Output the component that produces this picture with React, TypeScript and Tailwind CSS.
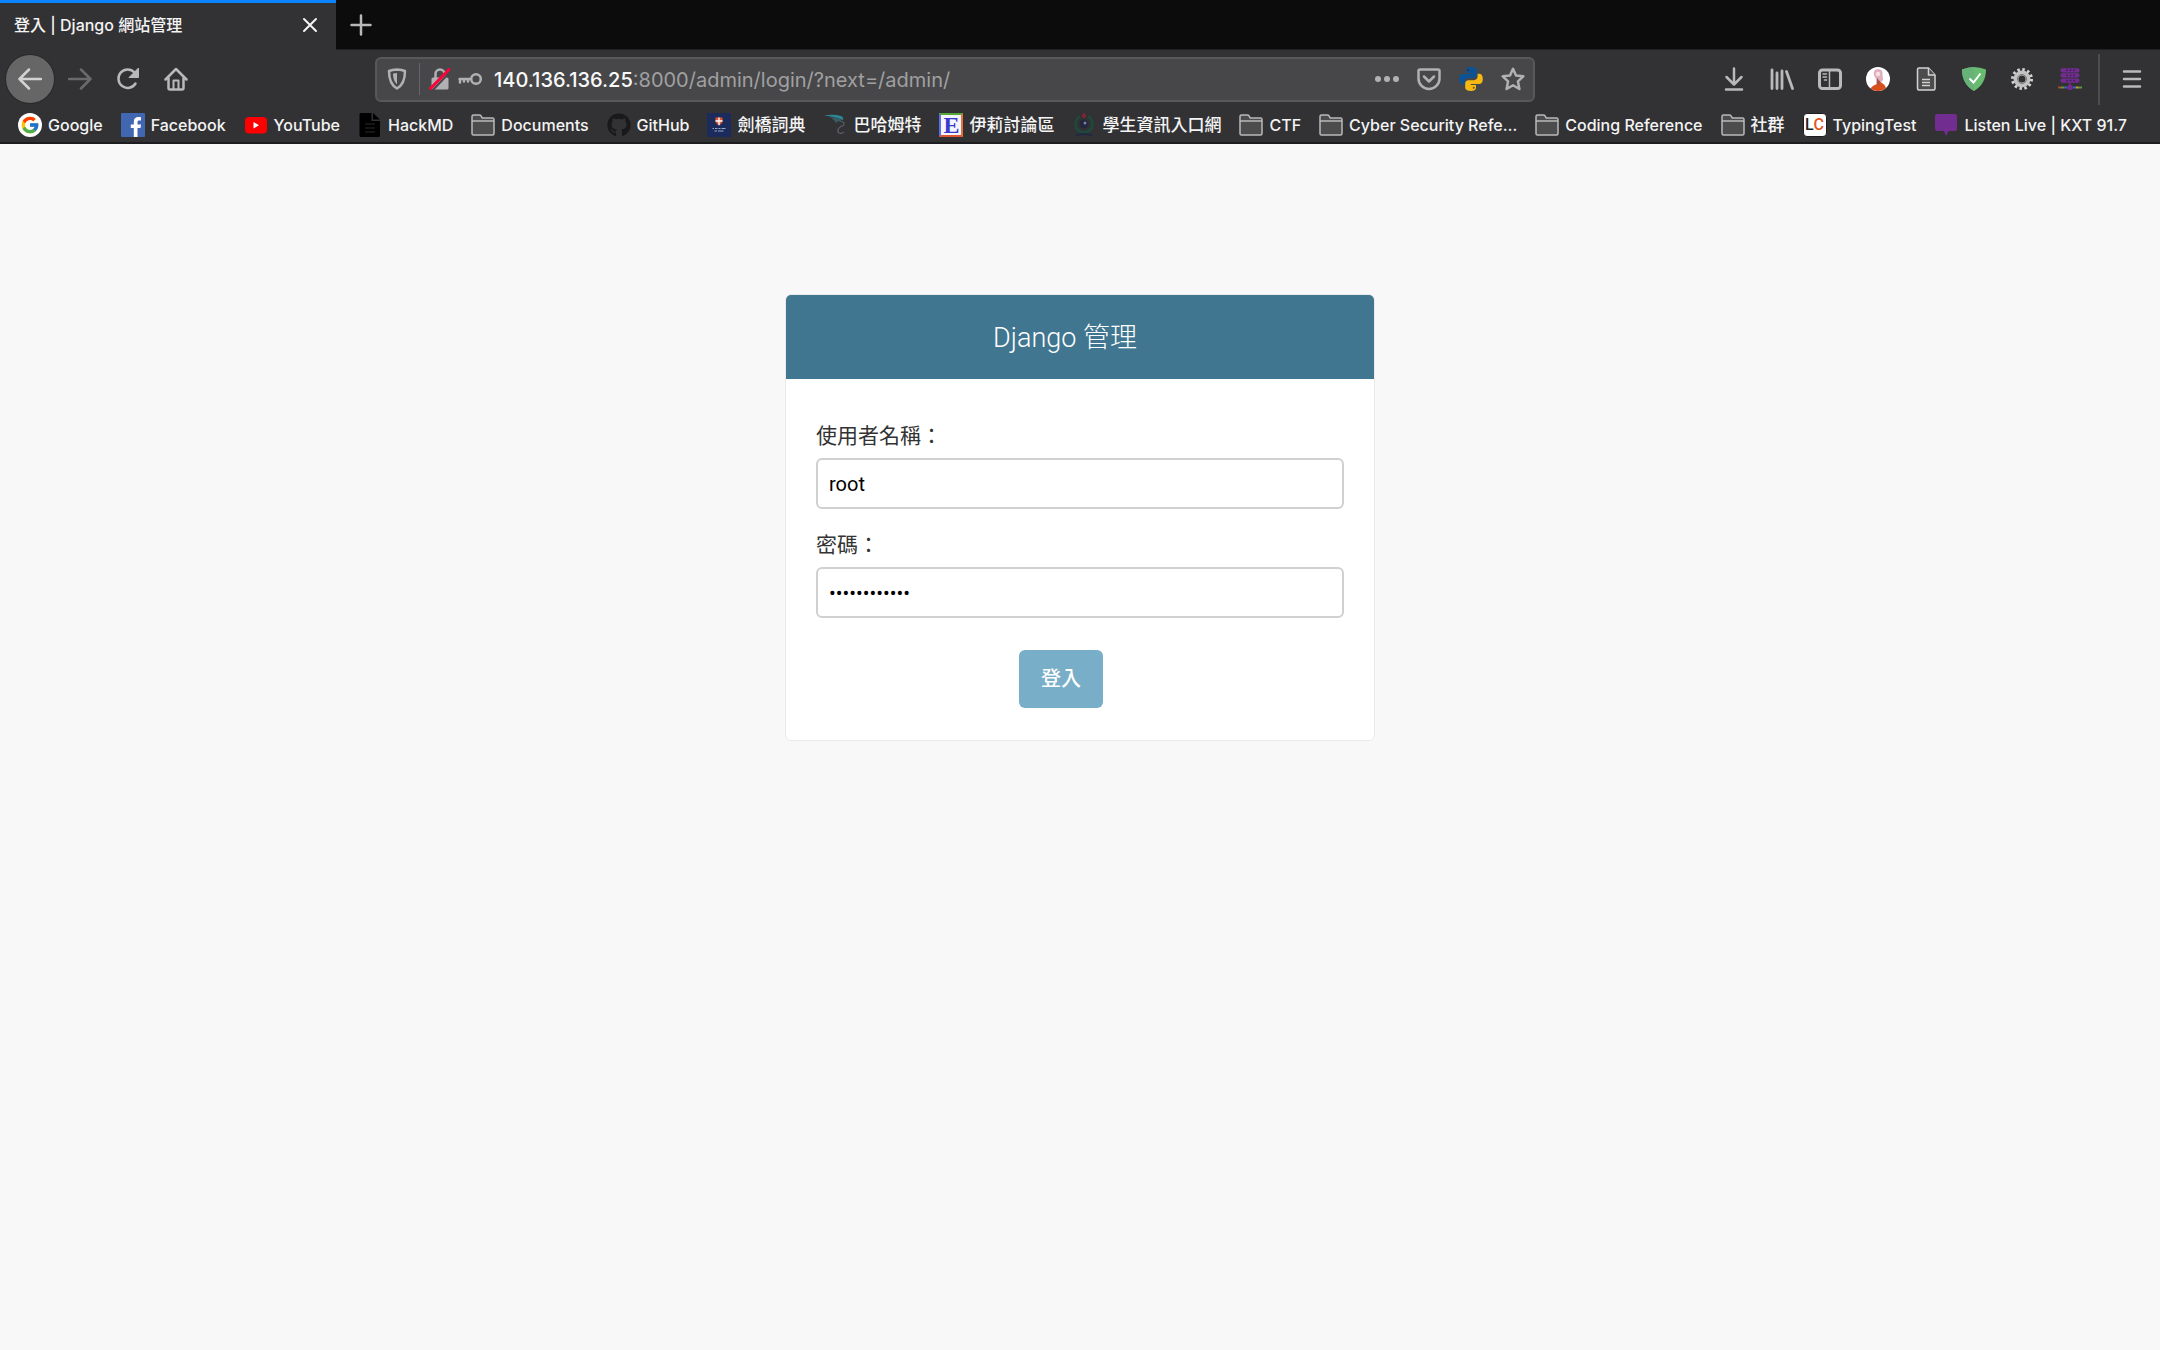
import type { ReactNode } from "react";
import { FaGithub } from "react-icons/fa";
import { FcGoogle } from "react-icons/fc";

type Bookmark = { label: string; icon: ReactNode; cjk?: boolean };

function FolderIcon() {
  return (
    <svg viewBox="0 0 24 24" className="size-6" fill="#4c4c4d" stroke="#b9b9ba" strokeWidth="1.500" strokeLinejoin="round">
      <path d="M1 20.500V3.500q0-1.500 1.500-1.500h6q1 0 1.500.8L11.300 5H21.500q1.500 0 1.500 1.500v14q0 1.500-1.500 1.500h-19Q1 22 1 20.500Z" />
      <path d="M1 8h22" />
    </svg>
  );
}

function GoogleIcon() {
  return (
    <span className="flex size-6 items-center justify-center rounded-full bg-white">
      <FcGoogle className="size-5" />
    </span>
  );
}

function FacebookIcon() {
  return (
    <svg viewBox="0 0 24 24" className="size-6">
      <rect width="24" height="24" rx="1" fill="#4267b2" />
      <path d="M16.500 24v-9h3l.5-3.600h-3.500V9.200c0-1.100.4-1.700 1.800-1.700H20V4.300c-.4 0-1.400-.2-2.700-.2-2.700 0-4.500 1.600-4.500 4.600v2.700H9.800V15h3v9Z" fill="#fff" />
    </svg>
  );
}

function YouTubeIcon() {
  return (
    <svg viewBox="0 0 24 24" className="size-6">
      <rect x="1" y="4" width="22" height="16.500" rx="4" fill="#f00" />
      <path d="M9.500 9v6.500l5.500-3.250Z" fill="#fff" />
    </svg>
  );
}

function HackMdIcon() {
  return (
    <svg viewBox="0 0 24 24" className="size-6">
      <path d="M1.500 1.500Q1.500 0 3 0H13.500v8h8.500v14.500q0 1.500-1.500 1.500H3q-1.500 0-1.500-1.500Z" fill="#000" />
      <path d="M15 0l7 6.500h-7Z" fill="#000" />
      <path d="M7 11h10M7 15h10M7 19h10" stroke="#2b2b2d" strokeWidth="1.200" />
    </svg>
  );
}

function CambridgeIcon() {
  return (
    <svg viewBox="0 0 24 24" className="size-6">
      <rect width="24" height="24" fill="#1b2c5c" />
      <path d="M8.500 4.500h7v4q-.8 2.800-3.500 3.800-2.700-1-3.500-3.800Z" fill="#e4572e" />
      <path d="M12 4.500v7.800M8.500 8h7" stroke="#fff" strokeWidth="1.300" />
      <path d="M5.500 15.500h1.500m1 0h2.500m1 0h2m1 0h4M7.500 18h2.500m1 0h5.500" stroke="#9aa6c8" strokeWidth="1.100" />
    </svg>
  );
}

function BahamutIcon() {
  return (
    <svg viewBox="0 0 24 24" className="size-6">
      <path d="M1 2.500q10-1.500 17 .5 3 1.500 2 4-8-3.500-19-4.500Z" fill="#2b8793" />
      <path d="M6 4q7 .5 12 2.500l1 3-4-1.500q-1 2.500-2.500 1.500Q11 6 6 4Z" fill="#3a5d63" />
      <path d="M19 8.500q3 1 1.500 4-3 .5-5 3-1.500 3 .5 4.500 2.500 1 5-1" fill="none" stroke="#5c6265" strokeWidth="1.200" />
    </svg>
  );
}

function EyneyIcon() {
  return (
    <span className="flex size-6 items-center justify-center border-2 border-t-[#55a63a] border-r-[#e8703a] border-b-[#dd5533] border-l-[#5a6fe8] bg-[#f4f4fc] font-['Liberation_Serif',serif] text-2xl leading-none font-bold text-[#3a3ac8]">
      E
    </span>
  );
}

function SchoolIcon() {
  return (
    <svg viewBox="0 0 24 24" className="size-6">
      <path d="M8 3.500a8.500 8.500 0 1 0 8 0" fill="none" stroke="#1c4a3c" strokeWidth="2.500" />
      <path d="M12 0v5M10 3h4" stroke="#84242c" strokeWidth="2" />
      <circle cx="12" cy="11" r="4.500" fill="#23263c" />
      <circle cx="13" cy="10" r="1.500" fill="#77809c" />
      <path d="M4 22.500q8-3 16 0" fill="none" stroke="#222743" strokeWidth="2" />
    </svg>
  );
}

function TypingIcon() {
  return (
    <span className="flex size-6 items-center justify-center rounded-sm border border-[#1c1c1d] bg-white font-['Roboto',sans-serif] text-base leading-none font-medium text-[#222]">
      L<span className="text-[#e2571f]">C</span>
    </span>
  );
}

function KxtIcon() {
  return (
    <svg viewBox="0 0 24 24" className="size-6">
      <path d="M3 1h18q2 0 2 2v13q0 2-2 2h-6.500L12 23l-2-5H3q-2 0-2-2V3q0-2 2-2Z" fill="#722d91" />
    </svg>
  );
}

const bookmarks: Bookmark[] = [
  { label: "Google", icon: <GoogleIcon /> },
  { label: "Facebook", icon: <FacebookIcon /> },
  { label: "YouTube", icon: <YouTubeIcon /> },
  { label: "HackMD", icon: <HackMdIcon /> },
  { label: "Documents", icon: <FolderIcon /> },
  { label: "GitHub", icon: <FaGithub className="size-6 text-[#19191b]" /> },
  { label: "劍橋詞典", icon: <CambridgeIcon />, cjk: true },
  { label: "巴哈姆特", icon: <BahamutIcon />, cjk: true },
  { label: "伊莉討論區", icon: <EyneyIcon />, cjk: true },
  { label: "學生資訊入口網", icon: <SchoolIcon />, cjk: true },
  { label: "CTF", icon: <FolderIcon /> },
  { label: "Cyber Security Refe…", icon: <FolderIcon /> },
  { label: "Coding Reference", icon: <FolderIcon /> },
  { label: "社群", icon: <FolderIcon />, cjk: true },
  { label: "TypingTest", icon: <TypingIcon /> },
  { label: "Listen Live | KXT 91.7", icon: <KxtIcon /> },
];

function PythonIcon() {
  return (
    <svg viewBox="0 0 24 24" className="size-6">
      <path d="M11.900 0C8 0 7 1.500 7 3.400V6h5.200v1H4.300C2 7 .2 8.500.2 12.100c0 3.500 1.500 5.100 3.700 5.100H6v-2.800c0-2 1.600-3.600 3.600-3.600h5.200c1.700 0 3-1.400 3-3V3.400C17.800 1.300 15.800 0 11.900 0Z" fill="#0b5394" />
      <circle cx="9.300" cy="3.200" r="1" fill="#323234" />
      <path d="M12.100 24c3.900 0 4.900-1.500 4.900-3.400V18h-5.200v-1h7.900c2.300 0 4.100-1.500 4.100-5.100 0-3.500-1.500-5.100-3.700-5.100h-1.500v2.800c0 2-1.600 3.600-3.600 3.600H9.200c-1.700 0-3 1.400-3 3v4.400C6.200 22.700 8.200 24 12.100 24Z" fill="#f6b912" />
      <circle cx="14.700" cy="20.800" r="1" fill="#6b5a1d" />
    </svg>
  );
}

function AvatarIcon() {
  return (
    <svg viewBox="0 0 24 24" className="size-6">
      <clipPath id="avatar">
        <circle cx="12" cy="12" r="12" />
      </clipPath>
      <g clipPath="url(#avatar)">
        <rect width="24" height="24" fill="#fff" />
        <path d="M8 8.500Q6.500 2.500 12 2q5.500 0 4.500 6l.5 5-2.500 3H12l-2-4Z" fill="#dfb0bf" />
        <circle cx="12" cy="7" r="2.200" fill="#f5e2de" />
        <path d="M3 24q2-5 7-6.500l3-3.500 3 2q3 1.500 4 5l2 3Z" fill="#d9501e" />
        <path d="M11 11l3 3.500-1.500 4-2-2.500Z" fill="#a3524d" />
      </g>
    </svg>
  );
}

function GearIcon() {
  return (
    <svg viewBox="0 0 24 24" className="size-6">
      <circle cx="12" cy="12" r="9.500" fill="none" stroke="#d4d4d4" strokeWidth="3" strokeDasharray="2.500 2.475" />
      <circle cx="12" cy="12" r="6" fill="none" stroke="#c2c2c2" strokeWidth="5" />
      <circle cx="12" cy="12" r="4.500" fill="none" stroke="#777" strokeWidth="1" />
      <circle cx="12" cy="12" r="2.800" fill="#323234" />
    </svg>
  );
}

function ProxyIcon() {
  return (
    <svg viewBox="0 0 24 24" className="size-6">
      <rect x="2.500" y="1.200" width="19" height="4.300" rx="1.800" fill="#722d91" />
      <rect x="2.500" y="6.300" width="19" height="4.300" rx="1.800" fill="#722d91" />
      <rect x="2.500" y="11.400" width="19" height="4.300" rx="1.800" fill="#722d91" />
      <path d="M8 3.300h9M8 8.500h9M8 13.600h9" stroke="#47205b" strokeWidth="1.500" strokeDasharray="2 1.500" />
      <path d="M0 20.500h3" stroke="#b5472f" strokeWidth="2" />
      <path d="M3 20.500h3M20.500 20.500H24" stroke="#5c9a3c" strokeWidth="2" />
      <path d="M6 20.500h3M15 20.500h3" stroke="#3c67b0" strokeWidth="2" />
      <path d="M18 20.500h2.500" stroke="#d09a35" strokeWidth="2" />
      <path d="M12 15.500v5" stroke="#722d91" strokeWidth="1.500" />
      <circle cx="12" cy="20.500" r="2.800" fill="#722d91" />
    </svg>
  );
}

const extensions: { name: string; icon: ReactNode }[] = [
  {
    name: "Downloads",
    icon: (
      <svg viewBox="0 0 24 24" className="size-6" fill="none" stroke="#b9b9ba" strokeWidth="2.500" strokeLinecap="round" strokeLinejoin="round">
        <path d="M12 1.500V17M4.500 10l7.500 7.500L19.500 10M4 22.500h16" />
      </svg>
    ),
  },
  {
    name: "Library",
    icon: (
      <svg viewBox="0 0 24 24" className="size-6" fill="none" stroke="#b9b9ba" strokeWidth="2.800" strokeLinecap="round">
        <path d="M2 3v18.500M7 6v15.500M12 4v17.500M16.500 4.500l6 17" />
      </svg>
    ),
  },
  {
    name: "Sidebars",
    icon: (
      <svg viewBox="0 0 24 24" className="size-6" fill="none" stroke="#b9b9ba" strokeWidth="3" strokeLinecap="round">
        <rect x="1.500" y="3" width="21" height="18.500" rx="3" />
        <path d="M11.500 3v18.500" strokeWidth="1.500" />
        <path d="M5 7h3.500M5 10h3.500M6.500 13h2" strokeWidth="1.500" />
      </svg>
    ),
  },
  { name: "Profile", icon: <AvatarIcon /> },
  {
    name: "Page notes",
    icon: (
      <svg viewBox="0 0 24 24" className="size-6" fill="#4c4c4d" stroke="#d2d2d2" strokeWidth="1.500" strokeLinejoin="round">
        <path d="M5 1h9.500l6.500 7v13.500q0 1.500-1.500 1.500H5q-1.500 0-1.500-1.500v-19Q3.500 1 5 1Z" />
        <path d="M14.500 1v7H21M8 12.500h8M8 15.500h8M8 18.500h8" />
      </svg>
    ),
  },
  {
    name: "Protection",
    icon: (
      <svg viewBox="0 0 24 24" className="size-6">
        <path d="M12 0Q6 .3 0 2.500 0 17 12 24 24 17 24 2.500 18 .3 12 0Z" fill="#68bc71" />
        <path d="M12 0v24Q0 17 0 2.500 6 .3 12 0Z" fill="#67b279" />
        <path d="M7.500 11.500l4 4 7-9" fill="none" stroke="#fff" strokeWidth="2" />
      </svg>
    ),
  },
  { name: "Options", icon: <GearIcon /> },
  { name: "Proxy", icon: <ProxyIcon /> },
];

function TabStrip() {
  return (
    <div className="flex h-[50px] items-stretch border-b border-[#202022] bg-[#0c0c0d]">
      <div className="-mb-px flex w-[336px] items-center justify-between border-t-[3px] border-[#0a84ff] bg-[#323234] pr-4 pb-1 pl-3.5">
        <span className="text-base font-medium text-[#f4f4f5]">登入 | Django 網站管理</span>
        <button aria-label="Close tab">
          <svg viewBox="0 0 20 20" className="size-5" fill="none" stroke="#f4f4f5" strokeWidth="2" strokeLinecap="round">
            <path d="M4 4l12 12M16 4L4 16" />
          </svg>
        </button>
      </div>
      <button aria-label="New tab" className="flex w-[50px] items-center justify-center">
        <svg viewBox="0 0 24 24" className="size-6" fill="none" stroke="#b9b9ba" strokeWidth="2.500" strokeLinecap="round">
          <path d="M12 2.500v19M2.500 12h19" />
        </svg>
      </button>
    </div>
  );
}

function AddressBar() {
  return (
    <div className="flex h-[45px] w-full max-w-[1160px] items-center rounded-md border-2 border-[#58585a] bg-[#474749] px-2">
      <button aria-label="Tracking protection" className="mr-2.5">
        <svg viewBox="0 0 24 24" className="size-6">
          <path d="M12 2.500q-5 .3-8 1.500 0 13 8 17.500Q20 17 20 4 17 2.800 12 2.500Z" fill="none" stroke="#b1b1b3" strokeWidth="2.500" strokeLinejoin="round" />
          <path d="M12 6q-2.500.2-4 .8Q8 14 12 17.500Z" fill="#b1b1b3" />
        </svg>
      </button>
      <span className="h-8 w-px bg-[#62666f]" />
      <button aria-label="Connection is not secure" className="ml-2">
        <svg viewBox="0 0 24 24" className="size-6">
          <path d="M7.500 12V7a4.500 4.500 0 0 1 9 0v5" fill="none" stroke="#b1b1b3" strokeWidth="2.500" />
          <rect x="3.500" y="10.500" width="17" height="12" rx="1.500" fill="#b1b1b3" />
          <path d="M4 24L23.500 3.500" stroke="#474749" strokeWidth="2" />
          <path d="M2.500 21.500L21 2.500" stroke="#ff0039" strokeWidth="3" strokeLinecap="round" />
        </svg>
      </button>
      <button aria-label="Saved login" className="mr-3 ml-1.5">
        <svg viewBox="0 0 24 24" className="size-6">
          <circle cx="18" cy="12" r="4.800" fill="none" stroke="#b1b1b3" strokeWidth="2.500" />
          <path d="M13 12H1.500M2 12v3.500M6 12v2.500M10 12v2.500" fill="none" stroke="#b1b1b3" strokeWidth="2.500" strokeLinecap="round" />
        </svg>
      </button>
      <p className="flex-1 truncate pt-0.5 text-xl text-[#a0a0a2]">
        <span className="font-medium text-[#f9f9fa]">140.136.136.25</span>:8000/admin/login/?next=/admin/
      </p>
      <div className="flex items-center gap-[18px]">
        <button aria-label="Page actions">
          <svg viewBox="0 0 24 24" className="size-6" fill="#b1b1b3">
            <circle cx="3" cy="12" r="3" />
            <circle cx="12" cy="12" r="3" />
            <circle cx="21" cy="12" r="3" />
          </svg>
        </button>
        <button aria-label="Save to Pocket">
          <svg viewBox="0 0 24 24" className="size-6" fill="none" stroke="#b1b1b3" strokeWidth="2.500" strokeLinecap="round" strokeLinejoin="round">
            <path d="M3 2.500h18q1.500 0 1.500 1.500v7.500a10.500 10.500 0 0 1-21 0V4q0-1.500 1.500-1.500Z" />
            <path d="M7 9.500l5 5 5-5" />
          </svg>
        </button>
        <button aria-label="Python documentation">
          <PythonIcon />
        </button>
        <button aria-label="Bookmark this page">
          <svg viewBox="0 0 24 24" className="size-6" fill="none" stroke="#b1b1b3" strokeWidth="2.500" strokeLinejoin="round">
            <path d="M12 1.800l3 6.700 7.300.8-5.400 5 1.500 7.700L12 18.200 5.600 22l1.500-7.700-5.400-5L9 8.500Z" />
          </svg>
        </button>
      </div>
    </div>
  );
}

function NavBar() {
  return (
    <div className="flex h-[58px] items-center justify-between pr-4 pl-1.5">
      <div className="flex shrink-0 items-center gap-6">
        <button aria-label="Back" className="flex size-12 items-center justify-center rounded-full bg-[#666667] ring-1 ring-[#28282a]">
          <svg viewBox="0 0 24 24" className="size-6" fill="none" stroke="#d2d2d3" strokeWidth="2.500" strokeLinecap="round" strokeLinejoin="round">
            <path d="M23 12H1.500M11 2.500L1.500 12l9.500 9.500" />
          </svg>
        </button>
        <button aria-label="Forward" className="-ml-2.5">
          <svg viewBox="0 0 24 24" className="size-6" fill="none" stroke="#6a6a6b" strokeWidth="2.500" strokeLinecap="round" strokeLinejoin="round">
            <path d="M1 12h21.500M13 2.500l9.500 9.500-9.500 9.500" />
          </svg>
        </button>
        <button aria-label="Reload">
          <svg viewBox="0 0 24 24" className="size-6">
            <path d="M19.500 16.500A9.200 9.200 0 1 1 18.500 5.500" fill="none" stroke="#b9b9ba" strokeWidth="2.500" strokeLinecap="round" />
            <path d="M22.500 1v9.500H13Z" fill="#b9b9ba" stroke="#b9b9ba" strokeLinejoin="round" />
          </svg>
        </button>
        <button aria-label="Home">
          <svg viewBox="0 0 24 24" className="size-6" fill="none" stroke="#b9b9ba" strokeWidth="2.500" strokeLinecap="round" strokeLinejoin="round">
            <path d="M1.500 12.500L12 2l10.500 10.500M4.500 11v10q0 1.500 1.500 1.500h12q1.500 0 1.500-1.500V11" />
            <path d="M9.500 22v-8.500h5V22" strokeWidth="2" />
          </svg>
        </button>
      </div>
      <AddressBar />
      <div className="flex shrink-0 items-center gap-6">
        {extensions.map((item) => (
          <button key={item.name} aria-label={item.name}>
            {item.icon}
          </button>
        ))}
        <span className="-mr-1 -ml-2 h-[51px] w-0.5 bg-[#4d4d4f]" />
        <button aria-label="Menu">
          <svg viewBox="0 0 24 24" className="size-6" fill="none" stroke="#b9b9ba" strokeWidth="2.500" strokeLinecap="round">
            <path d="M4 4.500h16M4 12h16M4 19.500h16" />
          </svg>
        </button>
      </div>
    </div>
  );
}

function BookmarksBar() {
  return (
    <nav className="flex h-9 items-center gap-[18px] border-b-2 border-[#1d1d1f] px-[18px]">
      {bookmarks.map((item) => (
        <a key={item.label} href="#" className="flex shrink-0 items-center gap-1.5 leading-6 font-medium whitespace-nowrap text-[#f4f4f5]">
          {item.icon}
          <span className={item.cjk ? "text-[17px]" : "text-base"}>{item.label}</span>
        </a>
      ))}
    </nav>
  );
}

function LoginCard() {
  return (
    <div className="w-full max-w-[590px] overflow-hidden rounded-md border border-[#eaeaea] bg-white">
      <header className="flex h-[84px] items-center justify-center bg-[#417690] pt-0.5 pr-[30px]">
        <h1 className="text-[27px] font-light text-white">Django 管理</h1>
      </header>
      <form className="px-[30px] pt-[41px] pb-8" onSubmit={(e) => e.preventDefault()}>
        <div className="mb-5">
          <label htmlFor="username" className="mb-1.5 block text-[21px] leading-8 text-[#333]">
            使用者名稱：
          </label>
          <input
            id="username"
            type="text"
            defaultValue="root"
            className="block h-[51px] w-full rounded-md border-2 border-[#d0d0d0] bg-white px-[11px] text-xl text-black outline-none"
          />
        </div>
        <div className="mb-8">
          <label htmlFor="password" className="mb-1.5 block text-[21px] leading-8 text-[#333]">
            密碼：
          </label>
          <input
            id="password"
            type="password"
            defaultValue="abcdefghijkl"
            className="block h-[51px] w-full rounded-md border-2 border-[#d0d0d0] bg-white px-[11px] text-xl text-black outline-none"
          />
        </div>
        <div className="flex justify-center pr-[38px]">
          <button type="submit" className="h-[58px] rounded-md bg-[#79aec8] px-[22px] text-xl font-medium text-white">
            登入
          </button>
        </div>
      </form>
    </div>
  );
}

export default function App() {
  return (
    <div className="flex min-h-screen flex-col bg-[#f8f8f8] font-['Inter','Noto_Sans_CJK_TC',sans-serif]">
      <div className="bg-[#323234]">
        <TabStrip />
        <NavBar />
        <BookmarksBar />
      </div>
      <main className="flex flex-1 items-start justify-center pt-[150px] font-['Roboto','Noto_Sans_CJK_TC',sans-serif]">
        <LoginCard />
      </main>
    </div>
  );
}
